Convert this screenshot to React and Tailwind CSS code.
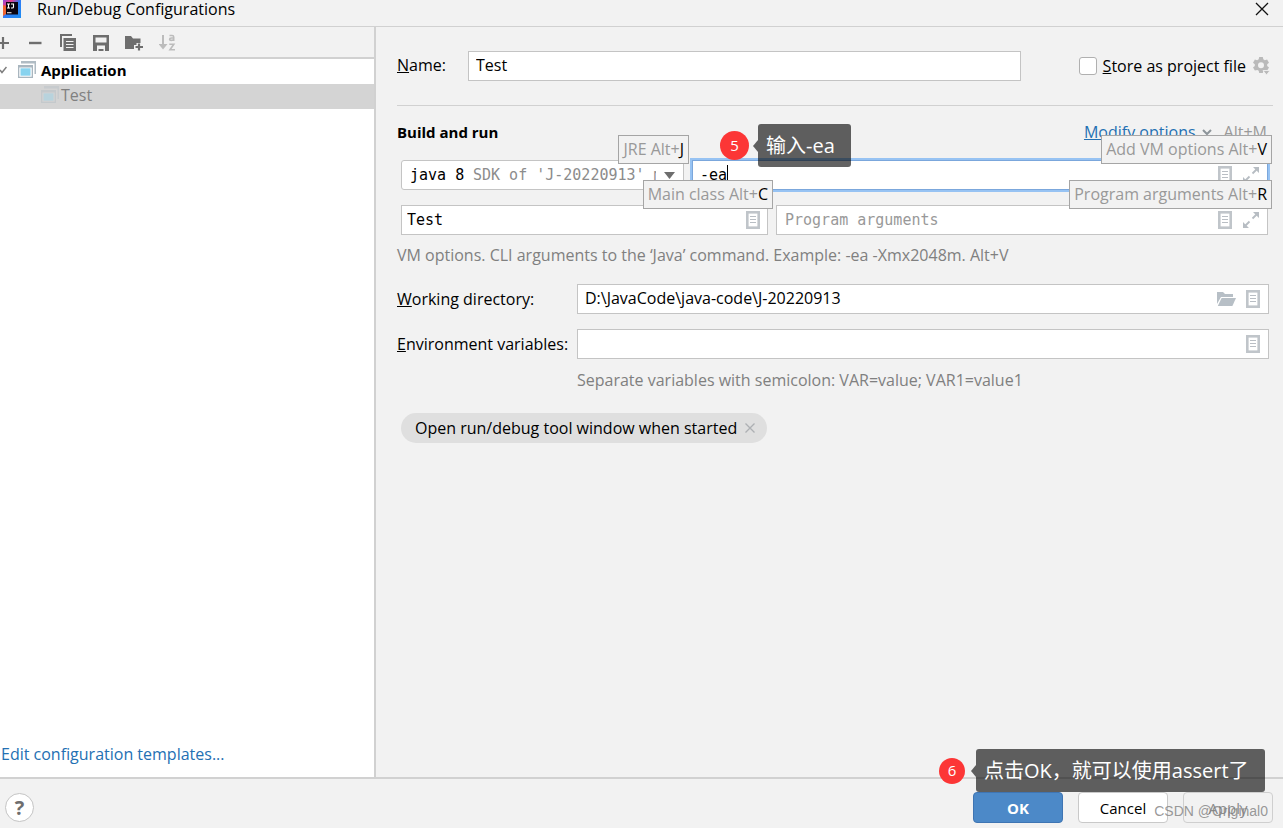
const MONO = "font-['DejaVu_Sans_Mono',monospace] text-[15px]";

function DocIcon() {
  return (
    <svg width="14" height="18" viewBox="0 0 14 18" className="shrink-0" aria-hidden="true">
      <rect x="1.300" y="1.300" width="11.400" height="15.400" fill="#fff" stroke="#c0c5ca" strokeWidth="2.600" />
      <path d="M4 5.500h6M4 8.500h6M4 11.500h6" stroke="#b9bec4" strokeWidth="1.200" />
    </svg>
  );
}

function ExpandIcon() {
  return (
    <svg width="16" height="16" viewBox="0 0 16 16" className="shrink-0" aria-hidden="true">
      <path d="M9.500 6.500 14 2M6.500 9.500 2 14" stroke="#b7bdc3" strokeWidth="1.800" />
      <path d="M10 0H16v6zM0 10V16h6z" fill="#b7bdc3" />
    </svg>
  );
}

function FolderOpenIcon() {
  return (
    <svg width="19" height="14" viewBox="0 0 19 14" className="shrink-0" aria-hidden="true">
      <path d="M0 0h6l2 2h8v3H4L0 12z" fill="#b7bfc6" />
      <path d="M4.600 6H19l-3.600 8H.8z" fill="#b7bfc6" />
    </svg>
  );
}

function WindowsIcon({ faded }) {
  return (
    <svg width="18" height="17" viewBox="0 0 18 17" className={faded ? "shrink-0 opacity-35" : "shrink-0"} aria-hidden="true">
      <path d="M3 0h15v13h-1.500V2.500H3z" fill="#b0bcc4" />
      <path d="M0 4h15v13H0z" fill="#a9b6bf" />
      <path d="M1.300 6.500h12.400v9.200H1.300z" fill={faded ? "#d4d4d4" : "#fff"} />
      <path d="M2.500 7.300h10v7.400h-10z" fill="#87d3ef" />
    </svg>
  );
}

function Hint({ text, letter, side }) {
  return (
    <div className={`absolute -top-[25px] z-10 flex h-[29px] items-center whitespace-pre border border-[#a5a5a5] bg-[#f2f2f2] px-1 pb-px font-['Open_Sans',sans-serif] text-[16px] text-[#999] ${side}`}>
      {text}<span className="text-black">{letter}</span>
    </div>
  );
}

function Step({ number, text, place, dot }) {
  return (
    <div className={`absolute z-20 flex h-[43px] items-center font-['Open_Sans','Noto_Sans_CJK_SC',sans-serif] text-white ${place}`}>
      <span className={`flex items-center justify-center rounded-full bg-[#fc3636] pb-px text-[15px] ${dot}`}>{number}</span>
      <svg width="5" height="12" viewBox="0 0 5 12" className="ml-1 shrink-0" aria-hidden="true">
        <path d="M5 0v12L0 6z" fill="#000" fillOpacity=".61" />
      </svg>
      <span className="flex h-full items-center whitespace-nowrap rounded-[3px] bg-black/61 pl-2 pr-4 text-[20px]">{text}</span>
    </div>
  );
}

function Toolbar() {
  const button = "flex size-[18px] shrink-0 items-center justify-center";
  return (
    <div className="flex h-8 shrink-0 items-center gap-[15px] overflow-hidden border-b-2 border-[#d1d1d1] pt-px">
      <button type="button" aria-label="Add" className="flex h-[18px] w-[11px] items-center">
        <svg width="11" height="12" viewBox="0 0 11 12"><path d="M0 6h9M3 0v12" stroke="#6e6e6e" strokeWidth="2.200" /></svg>
      </button>
      <button type="button" aria-label="Remove" className={button}>
        <svg width="14" height="4"><path d="M1 2h12.500" stroke="#6e6e6e" strokeWidth="2.400" /></svg>
      </button>
      <button type="button" aria-label="Copy" className={button}>
        <svg width="16" height="17" viewBox="0 0 16 17">
          <path d="M1 13V1h11" fill="none" stroke="#6e6e6e" strokeWidth="2" />
          <path d="M3.500 4H16v13H3.500z" fill="#6e6e6e" />
          <path d="M6 7.500h7.500M6 10.500h7.500M6 13.500h7.500" stroke="#f2f2f2" strokeWidth="1.100" />
        </svg>
      </button>
      <button type="button" aria-label="Save" className={button}>
        <svg width="16" height="16" viewBox="0 0 16 16">
          <path fillRule="evenodd" d="M0 0h16v16H0zM2.500 2.500v5h11v-5zM4 10.500V16h1.500v-2h5v2H12v-5.500z" fill="#6e6e6e" />
        </svg>
      </button>
      <button type="button" aria-label="New folder" className={button}>
        <svg width="18" height="16" viewBox="0 0 18 16">
          <path d="M0 1h6l2 2.500h7.500v4.500h-4v2H9v4H0z" fill="#6e6e6e" />
          <path d="M14 8.500v7M10.500 12H18" stroke="#6e6e6e" strokeWidth="2.200" />
        </svg>
      </button>
      <button type="button" aria-label="Sort" disabled className={button}>
        <svg width="17" height="17" viewBox="0 0 17 17" fill="none" stroke="#bcbcbc">
          <path d="M4 1v11" strokeWidth="2" />
          <path d="M-.5 10h9L4 15.500z" fill="#bcbcbc" stroke="none" />
          <path d="M10.500 1.500h2.600q1.600 0 1.600 1.400v4M15 4h-2.600q-1.800 0-1.800 1.200t1.600 1.200q1.600 0 2.600-1.200" strokeWidth="1.600" />
          <path d="M10.300 10.300h4.500L11 15.700h5" strokeWidth="1.600" />
        </svg>
      </button>
    </div>
  );
}

function Sidebar() {
  return (
    <aside className="flex w-[376px] shrink-0 flex-col border-r-2 border-[#d1d1d1]">
      <Toolbar />
      <div className="flex flex-1 flex-col bg-white">
        <div className="flex h-[25px] items-center pb-1">
          <svg width="7" height="8" viewBox="0 0 7 8" className="shrink-0" aria-hidden="true">
            <path d="M0 4l2 2.500L6.500 1" fill="none" stroke="#7d7d7d" strokeWidth="1.500" />
          </svg>
          <span className="ml-[11px] flex"><WindowsIcon /></span>
          <span className="ml-[5px] text-[15px] font-bold">Application</span>
        </div>
        <div className="flex h-[25px] items-center gap-[2px] bg-[#d4d4d4] pb-1 pl-[41px] text-[#808080]">
          <WindowsIcon faded />
          <span>Test</span>
        </div>
        <a href="#templates" className="mt-auto pb-[13px] pl-px text-[#2470b3]">Edit configuration templates...</a>
      </div>
    </aside>
  );
}

const box = "flex h-[30px] items-center border border-[#c4c4c4] bg-white";
const field = "h-full w-full min-w-0 flex-1 bg-transparent px-[7px] pb-[2px] outline-none";

export default function App() {
  return (
    <div className="flex min-h-screen flex-col bg-[#f2f2f2] font-['Open_Sans','Noto_Sans_CJK_SC',sans-serif] text-[16px] leading-5 text-black">
      <header className="flex h-[27px] shrink-0 items-center border-b border-[#d1d1d1] pb-[9px] pl-[3px] pr-[14px]">
        <svg width="18" height="18" viewBox="0 0 18 18" className="shrink-0" aria-hidden="true">
          <defs>
            <linearGradient id="logo" x1="0" y1="0" x2="1" y2="1">
              <stop offset="0" stopColor="#8a4be0" />
              <stop offset=".25" stopColor="#e63a8a" />
              <stop offset=".5" stopColor="#2f7df6" />
              <stop offset="1" stopColor="#1d8df2" />
            </linearGradient>
          </defs>
          <path d="M0 0h18v18H0z" fill="url(#logo)" />
          <path d="M0 5l3 1v8l-3 2z" fill="#f0642f" />
          <path d="M3 2h12v12.500H3z" fill="#0a0410" />
          <path d="M4 4h3M5.500 4v4M4 8h3M8 4h2.500v3q0 1-1.200 1H8M4 12.800h4.500" fill="none" stroke="#fff" strokeWidth="1.100" />
        </svg>
        <h1 className="ml-4 flex-1">Run/Debug Configurations</h1>
        <button type="button" aria-label="Close">
          <svg width="14" height="14" viewBox="0 0 14 14"><path d="M1 1l12 12M13 1L1 13" stroke="#111" strokeWidth="1.300" /></svg>
        </button>
      </header>

      <div className="flex flex-1">
        <Sidebar />
        <main className="min-w-0 flex-1 pl-[21px] pr-[10px] pt-6">
          <div className="flex items-center border-b border-[#d1d1d1] pb-6">
            <label htmlFor="name" className="w-[71px] pb-[2px]"><u>N</u>ame:</label>
            <div className={`${box} mr-[58px] flex-1`}>
              <input id="name" defaultValue="Test" className={field} />
            </div>
            <input id="store" type="checkbox" className="size-[18px] appearance-none rounded-[3px] border border-[#b0b0b0] bg-white checked:bg-[#4a88c7]" />
            <label htmlFor="store" className="ml-[6px]"><u>S</u>tore as project file</label>
            <button type="button" aria-label="Storage settings" className="ml-[7px] mr-[3px]">
              <svg width="17" height="18" viewBox="0 0 17 18">
                <path fillRule="evenodd" fill="#bababa" d="M6.200 0h3.600l.5 2.300 1.500.9 2.300-.7L16 5.700l-1.800 1.600v1.800L16 10.600l-1.800 3-2.400-.7-1.500.9-.5 2.200H6.200l-.5-2.200-1.500-.9-2.300.7L0 10.600l1.800-1.500V7.300L0 5.700l1.900-3.200 2.300.7 1.500-.9zM8 5.200a3 3 0 1 0 0 6 3 3 0 0 0 0-6z" />
                <path d="M10 13.500h7L13.500 18z" fill="#bababa" stroke="#f2f2f2" strokeWidth=".8" />
              </svg>
            </button>
          </div>

          <div className="flex items-center justify-between pb-[18px] pr-[6px] pt-4">
            <h2 className="text-[15px] font-bold">Build and run</h2>
            <div className="flex items-center">
              <a href="#modify" className="text-[#2470b3] underline">Modify options</a>
              <svg width="10" height="7" viewBox="0 0 10 7" className="ml-[6px] mr-3" aria-hidden="true">
                <path d="M1 1l4 4 4-4" fill="none" stroke="#8c9499" strokeWidth="2" />
              </svg>
              <span className="text-[#999]">Alt+M</span>
            </div>
          </div>

          <div className={`flex flex-col gap-[15px] pl-1 pr-[5px] ${MONO}`}>
            <div className="flex gap-2">
              <div className="relative w-[283px] shrink-0">
                <div className="grid h-[30px] items-center rounded-[3px] border border-[#c4c4c4] bg-white">
                  <select aria-label="JRE" className="col-start-1 row-start-1 h-full w-full appearance-none bg-transparent pl-2 outline-none">
                    <option>java 8</option>
                  </select>
                  <span className="pointer-events-none col-start-1 row-start-1 ml-[71px] w-[183px] overflow-hidden whitespace-nowrap text-[#8c8c8c]">SDK of 'J-20220913' module</span>
                  <svg width="11" height="7" viewBox="0 0 11 7" className="pointer-events-none col-start-1 row-start-1 mr-2 justify-self-end" aria-hidden="true">
                    <path d="M0 0h11L5.500 7z" fill="#6e6e6e" />
                  </svg>
                </div>
                <Hint text="JRE Alt+" letter="J" side="-right-[5px]" />
              </div>
              <div className="relative min-w-0 flex-1">
                <div className="flex h-[30px] items-center border border-[#7ba7dc] bg-white pl-[7px] pr-2 ring-2 ring-[#97c3f3]">
                  <input aria-label="VM options" defaultValue="-ea" className="h-full min-w-0 field-sizing-content bg-transparent outline-none" />
                  <span className="h-5 w-px bg-black" />
                  <span className="ml-auto flex items-center gap-[11px]"><DocIcon /><ExpandIcon /></span>
                </div>
                <Hint text="Add VM options Alt+" letter="V" side="-right-1" />
                <Step number="5" text="输入-ea" place="-top-9 left-7" dot="size-[29px]" />
              </div>
            </div>
            <div className="flex gap-2">
              <div className="relative w-[367px] shrink-0">
                <div className={`${box} pr-[7px]`}>
                  <input aria-label="Main class" defaultValue="Test" className="h-full min-w-0 flex-1 bg-transparent px-[5px] outline-none" />
                  <DocIcon />
                </div>
                <Hint text="Main class Alt+" letter="C" side="-right-[5px]" />
              </div>
              <div className="relative min-w-0 flex-1">
                <div className={`${box} gap-[11px] pr-2`}>
                  <input aria-label="Program arguments" placeholder="Program arguments" className="h-full min-w-0 flex-1 bg-transparent px-2 outline-none placeholder:text-[#999]" />
                  <DocIcon /><ExpandIcon />
                </div>
                <Hint text="Program arguments Alt+" letter="R" side="-right-1" />
              </div>
            </div>
          </div>

          <p className="mt-[10px] text-[#808080]">VM options. CLI arguments to the ‘Java’ command. Example: -ea -Xmx2048m. Alt+V</p>

          <div className="mt-[19px] grid grid-cols-[180px_1fr] items-center gap-y-[15px] pr-1">
            <label htmlFor="dir"><u>W</u>orking directory:</label>
            <div className={`${box} gap-[10px] pr-2`}>
              <input id="dir" defaultValue="D:\JavaCode\java-code\J-20220913" className={field} />
              <FolderOpenIcon /><DocIcon />
            </div>
            <label htmlFor="env" className="whitespace-nowrap"><u>E</u>nvironment variables:</label>
            <div className={`${box} pr-2`}>
              <input id="env" className={field} />
              <DocIcon />
            </div>
          </div>
          <p className="ml-[180px] mt-[11px] text-[#808080]">Separate variables with semicolon: VAR=value; VAR1=value1</p>

          <div className="ml-1 mt-[23px] inline-flex h-[30px] items-center gap-2 rounded-full bg-[#dfdfdf] pl-[14px] pr-3">
            <span>Open run/debug tool window when started</span>
            <button type="button" aria-label="Remove option">
              <svg width="10" height="10" viewBox="0 0 10 10"><path d="M.5.5l9 9M9.500.5l-9 9" stroke="#adb0b3" strokeWidth="1.300" /></svg>
            </button>
          </div>
        </main>
      </div>

      <footer className="relative flex shrink-0 items-center justify-between border-t-2 border-[#d1d1d1] pb-[5px] pl-[5px] pr-[10px] pt-[13px] text-[15px]">
        <button type="button" aria-label="Help" className="flex size-[29px] items-center justify-center rounded-full border border-[#c4c4c4] bg-white text-[20px] font-bold text-[#6e6e6e]">?</button>
        <div className="flex gap-[15px]">
          <div className="relative">
            <button type="button" className="h-[31px] w-[90px] rounded-[4px] border border-[#3f75b3] bg-[#4c89c8] font-bold text-white">OK</button>
            <Step number="6" text="点击OK，就可以使用assert了" place="bottom-full -left-[34px]" dot="size-[26px] mr-[2px]" />
          </div>
          <button type="button" className="h-[31px] w-[90px] rounded-[4px] border border-[#c9c9c9] bg-white">Cancel</button>
          <button type="button" disabled className="h-[31px] w-[90px] rounded-[4px] border border-[#cfcfcf] text-[#8c8c8c]">Apply</button>
        </div>
        <span className="pointer-events-none absolute bottom-[7px] right-[15px] font-['Liberation_Sans',sans-serif] text-[14px] text-[#808080]/80">CSDN @Original0</span>
      </footer>
    </div>
  );
}
